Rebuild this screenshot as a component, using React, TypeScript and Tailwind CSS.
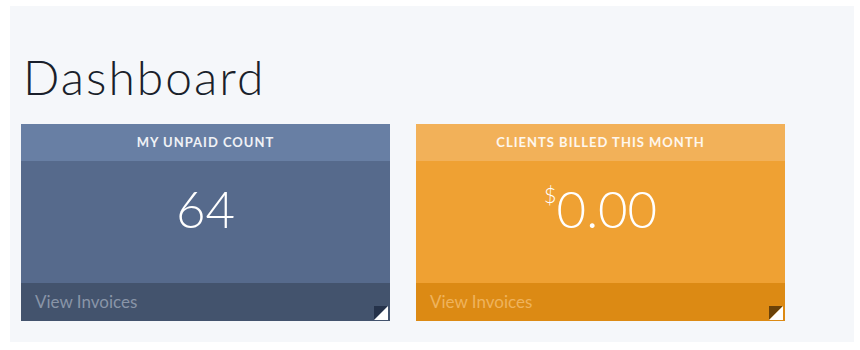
import React from "react";

type StatCardProps = {
  title: string;
  value: React.ReactNode;
  link: string;
  headerBg: string;
  bodyBg: string;
  footerBg: string;
  linkColor: string;
  cornerDark: string;
};

const CornerMark = ({ dark }: { dark: string }) => (
  <svg width="14" height="14" viewBox="0 0 14 14" className="absolute right-[2px] bottom-[1px]">
    <polygon points="0,0 14,0 0,14" fill={dark} />
    <polygon points="14,0 14,14 0,14" fill="#ffffff" />
  </svg>
);

const StatCard = ({ title, value, link, headerBg, bodyBg, footerBg, linkColor, cornerDark }: StatCardProps) => {
  return (
    <div className="flex flex-col w-[369px] h-[197px]">
      <div className={`${headerBg} h-[37px] flex items-center justify-center`}>
        <span className="text-[13px] font-bold tracking-[1px] text-white/90">{title}</span>
      </div>
      <div className={`${bodyBg} h-[122px] flex justify-center pt-[22px]`}>
        <div className="text-[51px] font-light leading-none text-white">{value}</div>
      </div>
      <div className={`${footerBg} relative h-[38px] flex items-center px-[14px]`}>
        <span className={`text-[17px] ${linkColor}`}>{link}</span>
        <CornerMark dark={cornerDark} />
      </div>
    </div>
  );
};

export default function App() {
  return (
    <div className="w-[860px] h-[350px] bg-white pt-[6px] pl-[10px] font-['Lato',sans-serif]">
      <div className="w-[844px] h-[336px] bg-[#f5f7fa] pl-[11px] pt-[47px]">
        <h1 className="text-[48px] font-light leading-none tracking-[2px] text-[#1a1f2b] ml-[2px]">Dashboard</h1>
        <div className="flex gap-[26px] mt-[23px]">
          <StatCard
            title="MY UNPAID COUNT"
            value="64"
            link="View Invoices"
            headerBg="bg-[#687fa4]"
            bodyBg="bg-[#566a8c]"
            footerBg="bg-[#43536d]"
            linkColor="text-[#8995a8]"
            cornerDark="#25324a"
          />
          <StatCard
            title="CLIENTS BILLED THIS MONTH"
            value={
              <span className="flex items-start">
                <span className="text-[22px] mt-[1px]">$</span>
                <span>0.00</span>
              </span>
            }
            link="View Invoices"
            headerBg="bg-[#f2b159]"
            bodyBg="bg-[#efa133]"
            footerBg="bg-[#dc8a14]"
            linkColor="text-[#efb35c]"
            cornerDark="#6b4208"
          />
        </div>
      </div>
    </div>
  );
}
